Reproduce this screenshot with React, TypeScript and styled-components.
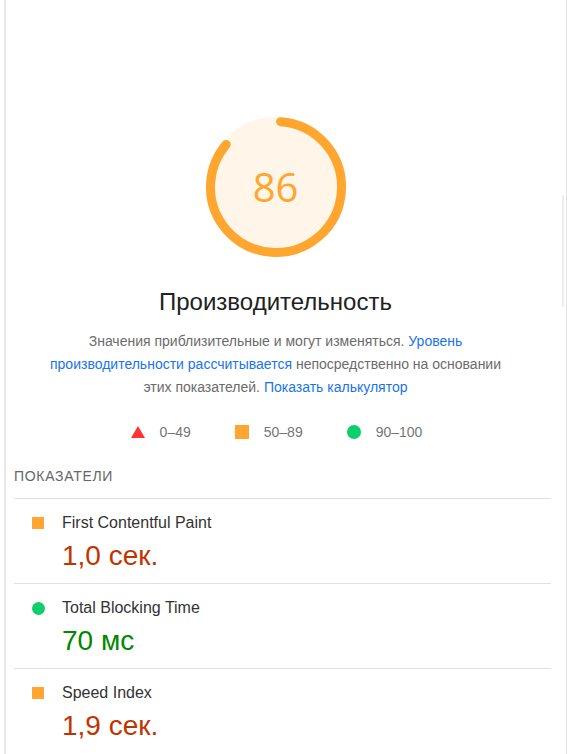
import React from "react";
import styled, { createGlobalStyle } from "styled-components";

const GlobalStyle = createGlobalStyle`
  html, body { margin: 0; padding: 0; background: #ffffff; }
  body { overflow: hidden; font-family: "Liberation Sans", Arial, sans-serif; }
`;

const Page = styled.div`
  padding-left: 4px;
  box-sizing: border-box;
  width: 567px;
  min-height: 100vh;
`;

const Panel = styled.div`
  position: relative;
  box-sizing: border-box;
  width: 563px;
  min-height: 100vh;
  border-left: 2px solid #e8e8e8;
  border-right: 1px solid #e3e3e3;
  display: flex;
  flex-direction: column;
`;

const ScrollThumb = styled.div`
  position: absolute;
  right: 2px;
  top: 195px;
  width: 2px;
  height: 112px;
  background: #ededed;
`;

const Summary = styled.section`
  display: flex;
  flex-direction: column;
  align-items: center;
  margin-right: 21px;
  padding-top: 117px;
`;

const GaugeBox = styled.div`
  position: relative;
  width: 140px;
  height: 140px;
`;

const GaugeSvg = styled.svg`
  display: block;
  width: 140px;
  height: 140px;
`;

const GaugeValue = styled.div`
  position: absolute;
  inset: 0;
  display: flex;
  align-items: center;
  justify-content: center;
  font-family: "Open Sans", "Liberation Sans", sans-serif;
  font-size: 40px;
  color: #ffa630;
  line-height: 1;
`;

const Title = styled.h1`
  margin: 31px 0 0;
  font-size: 24px;
  line-height: 28px;
  font-weight: 400;
  color: #212121;
`;

const Description = styled.p`
  margin: 14px 0 0;
  width: 466px;
  text-align: center;
  font-size: 14px;
  line-height: 23px;
  color: #6b6b6b;
`;

const Link = styled.a`
  color: #1a73e8;
  text-decoration: none;
`;

const Legend = styled.div`
  margin-top: 25px;
  margin-left: 2px;
  display: flex;
  align-items: center;
  gap: 44px;
`;

const LegendItem = styled.div`
  display: flex;
  align-items: center;
  gap: 15px;
  font-size: 14px;
  line-height: 16px;
  color: #757575;
`;

const Triangle = styled.span`
  width: 0;
  height: 0;
  border-left: 7px solid transparent;
  border-right: 7px solid transparent;
  border-bottom: 12px solid #ff3333;
`;

const Square = styled.span<{ $size: number }>`
  width: ${(p) => p.$size}px;
  height: ${(p) => p.$size}px;
  background: #ffa630;
`;

const Dot = styled.span<{ $size: number }>`
  width: ${(p) => p.$size}px;
  height: ${(p) => p.$size}px;
  border-radius: 50%;
  background: #0cce6b;
`;

const Metrics = styled.section`
  margin-top: 28px;
  padding-left: 8px;
  padding-right: 15px;
`;

const SectionTitle = styled.h2`
  margin: 0 0 14px;
  font-size: 14px;
  line-height: 16px;
  font-weight: 400;
  letter-spacing: 0.7px;
  text-transform: uppercase;
  color: #666666;
`;

const MetricRow = styled.div`
  border-top: 1px solid #e0e0e0;
  padding: 14px 0 11px 17px;
  display: grid;
  grid-template-columns: 14px 1fr;
  column-gap: 17px;
  row-gap: 7px;
  align-items: center;
`;

const IconCell = styled.div`
  display: flex;
  align-items: center;
  justify-content: center;
`;

const MetricLabel = styled.div`
  font-size: 16px;
  line-height: 20px;
  color: #333333;
`;

const MetricValue = styled.div<{ $color: string }>`
  grid-column: 2;
  font-size: 28px;
  line-height: 32px;
  color: ${(p) => p.$color};
`;

type Metric = { label: string; value: string; kind: "avg" | "pass" };

const metrics: Metric[] = [
  { label: "First Contentful Paint", value: "1,0 сек.", kind: "avg" },
  { label: "Total Blocking Time", value: "70 мс", kind: "pass" },
  { label: "Speed Index", value: "1,9 сек.", kind: "avg" },
];

const R = 65.5;
const C = 2 * Math.PI * R;

export default function App() {
  return (
    <>
      <GlobalStyle />
      <Page>
        <Panel>
          <ScrollThumb />
          <Summary>
            <GaugeBox>
              <GaugeSvg viewBox="0 0 140 140">
                <circle cx="70" cy="70" r={R} fill="#fff5e9" stroke="#fff5e9" strokeWidth="9" />
                <circle
                  cx="70"
                  cy="70"
                  r={R}
                  fill="none"
                  stroke="#ffa630"
                  strokeWidth="9"
                  strokeLinecap="round"
                  strokeDasharray={`${C * 0.85} ${C}`}
                  transform="rotate(-86 70 70)"
                />
              </GaugeSvg>
              <GaugeValue>86</GaugeValue>
            </GaugeBox>
            <Title>Производительность</Title>
            <Description>
              Значения приблизительные и могут изменяться.{" "}
              <Link href="#">Уровень производительности рассчитывается</Link>{" "}
              непосредственно на основании этих показателей.{" "}
              <Link href="#">Показать калькулятор</Link>
            </Description>
            <Legend>
              <LegendItem>
                <Triangle />
                0–49
              </LegendItem>
              <LegendItem>
                <Square $size={14} />
                50–89
              </LegendItem>
              <LegendItem>
                <Dot $size={14} />
                90–100
              </LegendItem>
            </Legend>
          </Summary>
          <Metrics>
            <SectionTitle>Показатели</SectionTitle>
            {metrics.map((m) => (
              <MetricRow key={m.label}>
                <IconCell>
                  {m.kind === "avg" ? <Square $size={12} /> : <Dot $size={13} />}
                </IconCell>
                <MetricLabel>{m.label}</MetricLabel>
                <MetricValue $color={m.kind === "avg" ? "#c33300" : "#008800"}>
                  {m.value}
                </MetricValue>
              </MetricRow>
            ))}
          </Metrics>
        </Panel>
      </Page>
    </>
  );
}
